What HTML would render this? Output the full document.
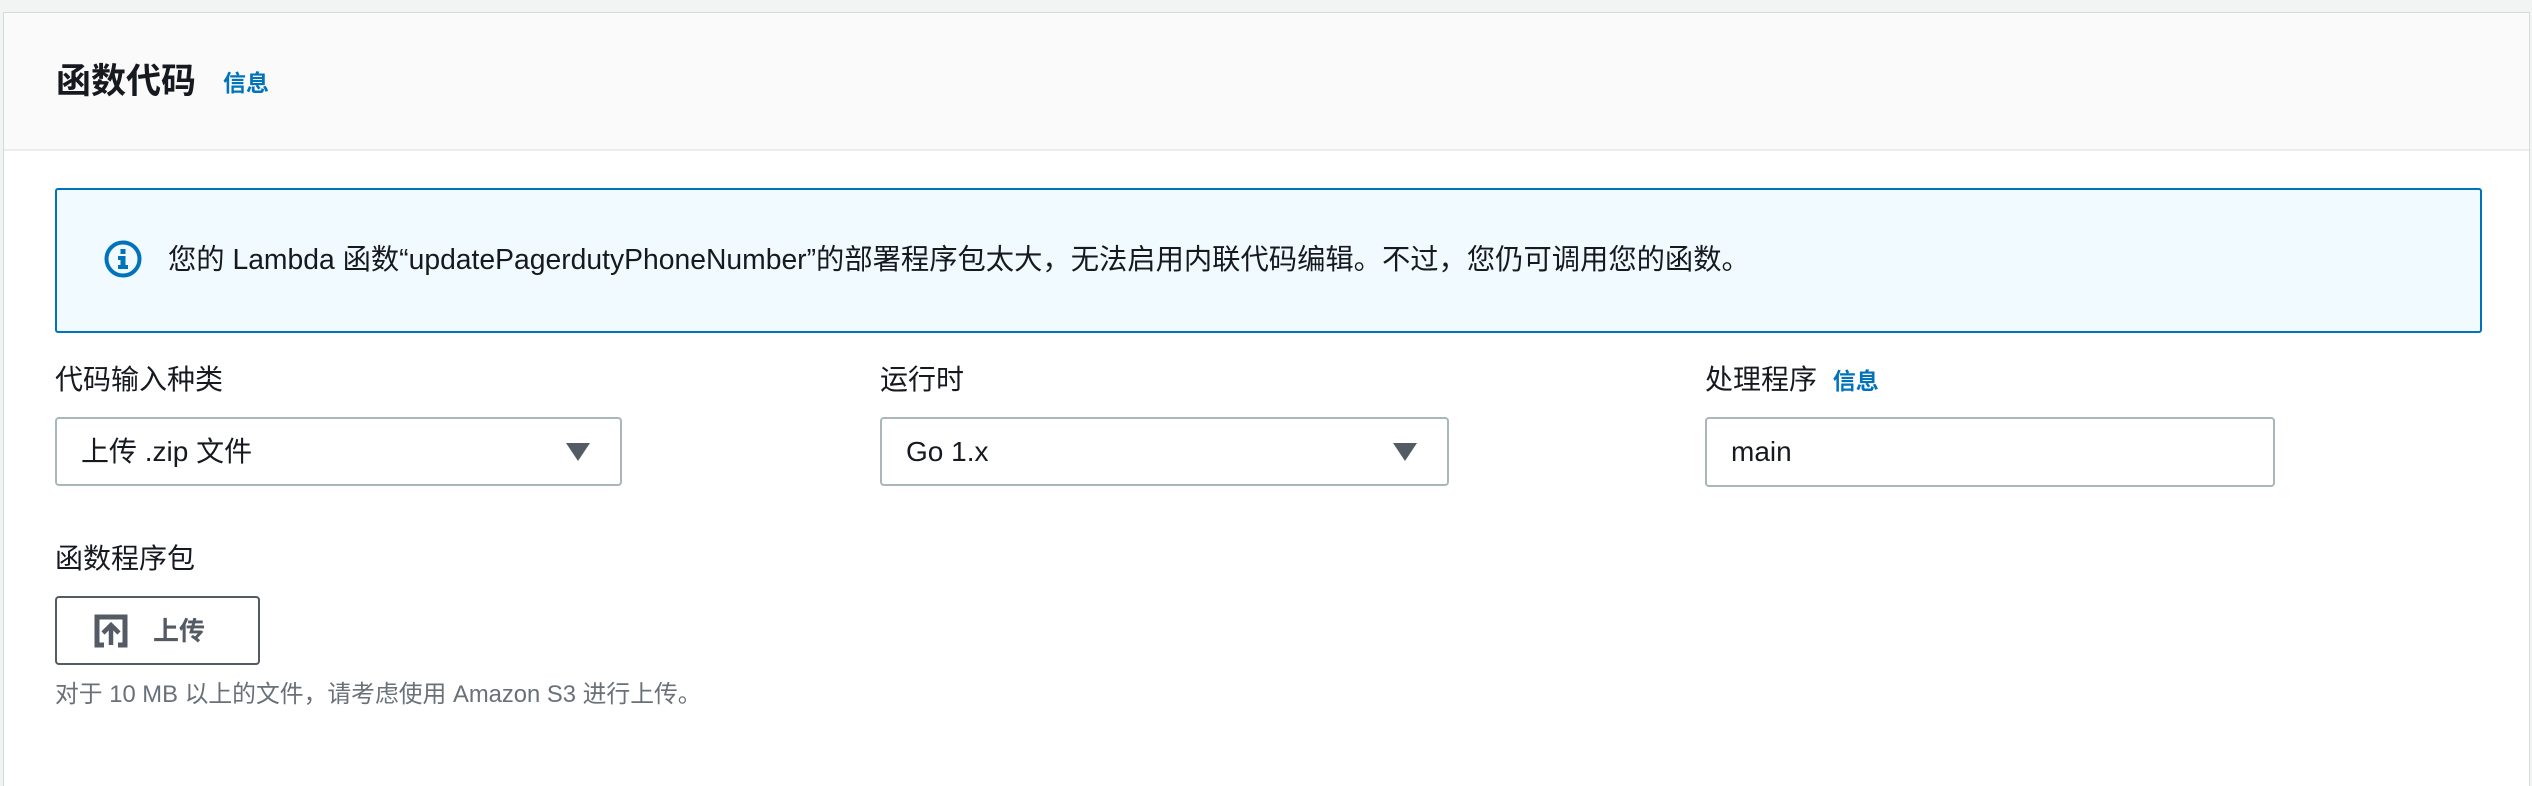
<!DOCTYPE html>
<html><head><meta charset="utf-8"><style>
*{box-sizing:border-box;margin:0;padding:0}
html,body{width:2532px;height:786px;overflow:hidden}
body{background:#f2f3f3;font-family:"Liberation Sans","Noto Sans CJK SC",sans-serif;color:#16191f;position:relative}
.card{position:absolute;left:3px;top:12px;width:2527px;height:790px;background:#fff;border:1px solid #d5dbdb;}
.hdr{position:absolute;height:138px;background:#fafafa;border-bottom:2px solid #eaeded}
.abs{position:absolute;white-space:nowrap}
.blue{color:#0073bb;font-weight:bold}
.alert{position:absolute;left:55px;top:188px;width:2427px;height:145px;background:#f1faff;border:2px solid #0073bb;border-radius:3px}
.lbl{font-size:28px;line-height:32px}
.sel{position:absolute;height:69px;border:2px solid #aab7b8;border-radius:4px;background:#fff;font-size:28px;line-height:65px;padding-left:24px}
.tri{position:absolute;right:30px;top:24px;width:0;height:0;border-left:12px solid transparent;border-right:12px solid transparent;border-top:18px solid #545b64}
</style></head><body>
<div class="card"></div>
<div class="hdr abs" style="left:4px;top:13px;width:2525px"></div>
<div class="abs" style="left:56px;top:60px;font-size:35px;font-weight:bold;line-height:44px">函数代码</div>
<div class="abs blue" style="left:223px;top:69px;font-size:23px;line-height:28px">信息</div>
<div class="alert"></div>
<svg class="abs" style="left:104px;top:240px" width="38" height="38" viewBox="0 0 38 38"><circle cx="19" cy="19" r="16.5" fill="none" stroke="#0073bb" stroke-width="4"/><rect x="16.5" y="9" width="5" height="5" fill="#0073bb"/><path d="M14 16h7.5v9h2.5v4h-10v-4h2.5v-5h-2.5z" fill="#0073bb"/></svg>
<div class="abs" style="left:168px;top:242px;font-size:28.3px;line-height:34px">您的 Lambda 函数“updatePagerdutyPhoneNumber”的部署程序包太大，无法启用内联代码编辑。不过，您仍可调用您的函数。</div>
<div class="abs lbl" style="left:55px;top:364px">代码输入种类</div>
<div class="abs lbl" style="left:880px;top:364px">运行时</div>
<div class="abs lbl" style="left:1705px;top:364px">处理程序 <span class="blue" style="font-size:23px;margin-left:8px">信息</span></div>
<div class="sel" style="left:55px;top:417px;width:567px">上传 .zip 文件<div class="tri"></div></div>
<div class="sel" style="left:880px;top:417px;width:569px">Go 1.x<div class="tri"></div></div>
<div class="sel" style="left:1705px;top:417px;width:570px;height:70px">main</div>
<div class="abs lbl" style="left:55px;top:543px">函数程序包</div>
<div class="abs" style="left:55px;top:596px;width:205px;height:69px;border:2px solid #545b64;border-radius:4px;background:#fff"></div>
<svg class="abs" style="left:94px;top:614px" width="34" height="34" viewBox="0 0 34 34"><path d="M10 3H3v28h7M24 3h7v28h-7" fill="none" stroke="#545b64" stroke-width="5"/><path d="M3 3h28" stroke="#545b64" stroke-width="5"/><path d="M17 31V12M9 19l8-8 8 8" fill="none" stroke="#545b64" stroke-width="4.5"/></svg>
<div class="abs" style="left:153px;top:614px;font-size:26px;font-weight:bold;color:#545b64;line-height:34px">上传</div>
<div class="abs" style="left:55px;top:681px;font-size:23.8px;color:#687078;line-height:28px">对于 10 MB 以上的文件，请考虑使用 Amazon S3 进行上传。</div>
</body></html>
